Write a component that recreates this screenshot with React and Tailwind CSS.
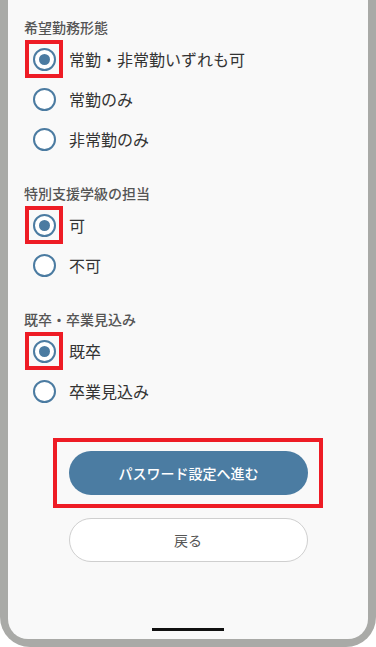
import { useState } from "react";

const sections = [
  {
    key: "work",
    title: "希望勤務形態",
    options: ["常勤・非常勤いずれも可", "常勤のみ", "非常勤のみ"],
  },
  {
    key: "support",
    title: "特別支援学級の担当",
    options: ["可", "不可"],
  },
  {
    key: "grad",
    title: "既卒・卒業見込み",
    options: ["既卒", "卒業見込み"],
  },
];

function Radio({ label, checked, onSelect }) {
  return (
    <button type="button" onClick={onSelect} className="flex items-center h-10 text-left">
      <span
        className={`ml-px w-[38px] h-[38px] border-4 flex items-center justify-center ${
          checked ? "border-[#ee1c25]" : "border-transparent"
        }`}
      >
        <span className="w-[23px] h-[23px] rounded-full border-2 border-[#4b7ba1] flex items-center justify-center bg-white">
          {checked && <span className="w-[11px] h-[11px] rounded-full bg-[#4b7ba1]" />}
        </span>
      </span>
      <span className="ml-[6px] text-[16px] text-[#333]">{label}</span>
    </button>
  );
}

export default function App() {
  const [values, setValues] = useState({ work: 0, support: 0, grad: 0 });

  return (
    <div
      className="w-[376px] h-[647px] bg-white overflow-hidden"
      style={{ fontFamily: '"Noto Sans CJK JP", "Noto Sans", sans-serif' }}
    >
      <div className="h-full bg-[#a9aaa7] rounded-b-[30px] px-2 pb-2 flex">
        <div className="flex-1 bg-[#f9f9f9] rounded-b-[20px] flex flex-col px-4 pt-[17px]">
          {sections.map((s, i) => (
            <div key={s.key} className={i > 0 ? "mt-6" : ""}>
              <div className="h-5 leading-5 text-[14px] font-medium text-[#555] mb-[2px]">{s.title}</div>
              <div className="flex flex-col">
                {s.options.map((o, idx) => (
                  <Radio
                    key={o}
                    label={o}
                    checked={values[s.key] === idx}
                    onSelect={() => setValues({ ...values, [s.key]: idx })}
                  />
                ))}
              </div>
            </div>
          ))}

          <div className="mt-[27px] mx-auto w-[270px] border-4 border-[#ee1c25] px-3 py-[9px]">
            <button
              type="button"
              className="w-[239px] h-11 rounded-full bg-[#4b7ca2] text-white text-[14px] font-medium"
            >
              パスワード設定へ進む
            </button>
          </div>

          <button
            type="button"
            className="mt-[10px] mx-auto w-[239px] h-11 rounded-full bg-white border border-[#cfcfcf] text-[#555] text-[14px]"
          >
            戻る
          </button>

          <div className="mt-auto mb-2 mx-auto w-[72px] h-[3px] bg-[#111]" />
        </div>
      </div>
    </div>
  );
}
